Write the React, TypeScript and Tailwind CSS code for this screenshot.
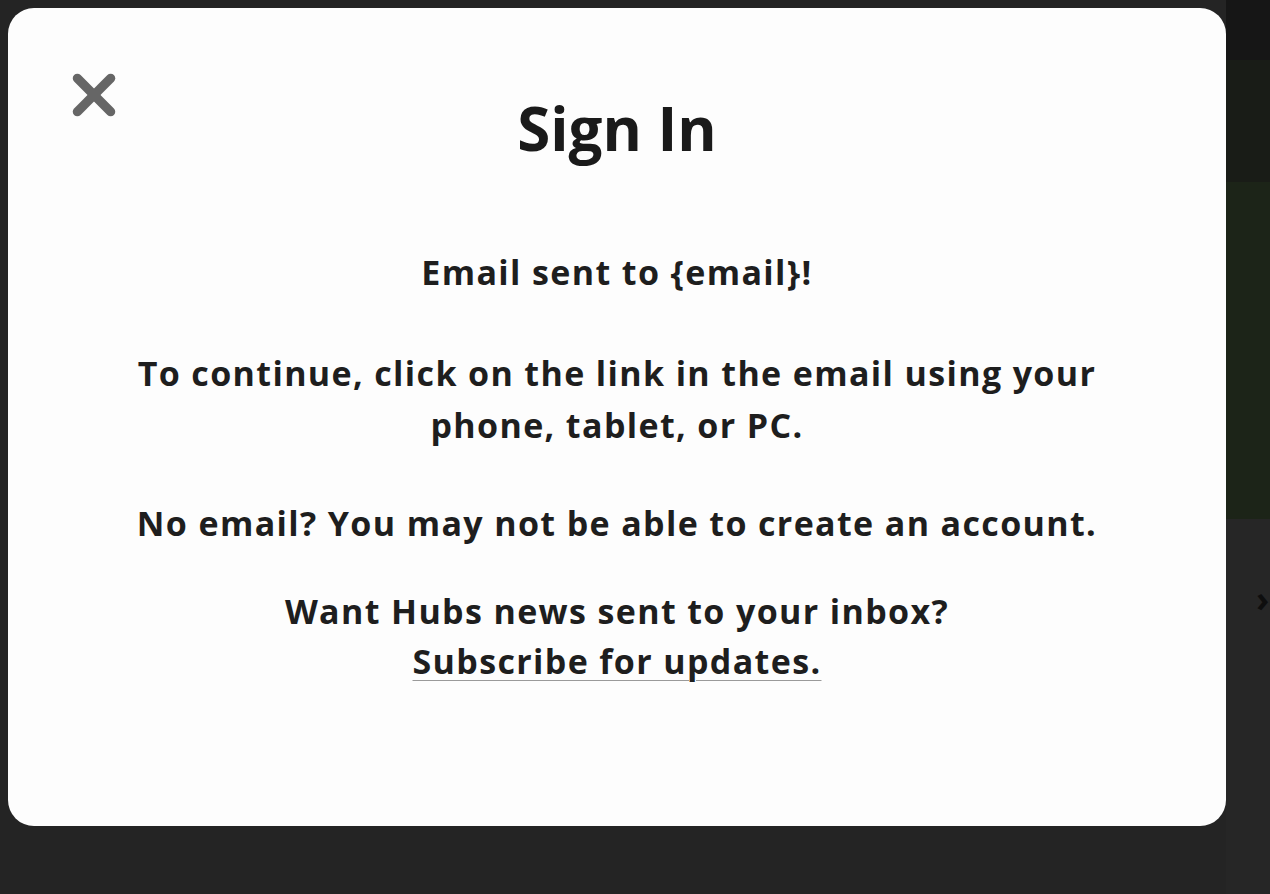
import React from 'react';

function CloseIcon() {
  return (
    <svg viewBox="0 0 24 24" className="w-[50px] h-[50px]" fill="none" stroke="#666666" strokeWidth={4.4} strokeLinecap="round">
      <path d="M4 4 L20 20" />
      <path d="M20 4 L4 20" />
    </svg>
  );
}

export default function App() {
  return (
    <div className="relative w-full h-[894px] bg-[#242424] overflow-hidden" style={{ fontFamily: '"Open Sans", "Liberation Sans", sans-serif' }}>
      {/* page behind the dialog */}
      <div className="flex h-full justify-end">
        <div className="w-[44px] flex flex-col">
          <div className="h-[60px] bg-[#161616]" />
          <div className="h-[122px] bg-[#191c17]" />
          <div className="h-[337px] bg-[#1c2418]" />
          <div className="flex-1 bg-[#262626] pt-[60px] pl-[30px] text-[#0e0e0e] text-4xl font-bold">›</div>
        </div>
      </div>

      {/* dialog */}
      <div className="absolute left-[8px] top-[8px] w-[1218px] h-[818px] bg-[#fdfdfd] rounded-[26px] flex flex-col items-center text-center text-[#1e1e1e]">
        <button className="absolute left-[61px] top-[62px]">
          <CloseIcon />
        </button>
        <h1 className="mt-[84px] text-[60px] leading-[72px] font-bold text-[#1a1a1a]">Sign In</h1>
        <div className="mt-[82px] text-[34px] leading-[52px] font-bold tracking-[0.04em] whitespace-nowrap">
          <p>Email sent to {'{email}'}!</p>
          <p className="mt-[49px]">
            To continue, click on the link in the email using your
            <br />
            phone, tablet, or PC.
          </p>
          <p className="mt-[46px]">No email? You may not be able to create an account.</p>
          <p className="mt-[37px] leading-[50px]">
            Want Hubs news sent to your inbox?
            <br />
            <a className="underline underline-offset-[6px] decoration-[#9a9a9a] decoration-1">Subscribe for updates.</a>
          </p>
        </div>
      </div>
    </div>
  );
}
